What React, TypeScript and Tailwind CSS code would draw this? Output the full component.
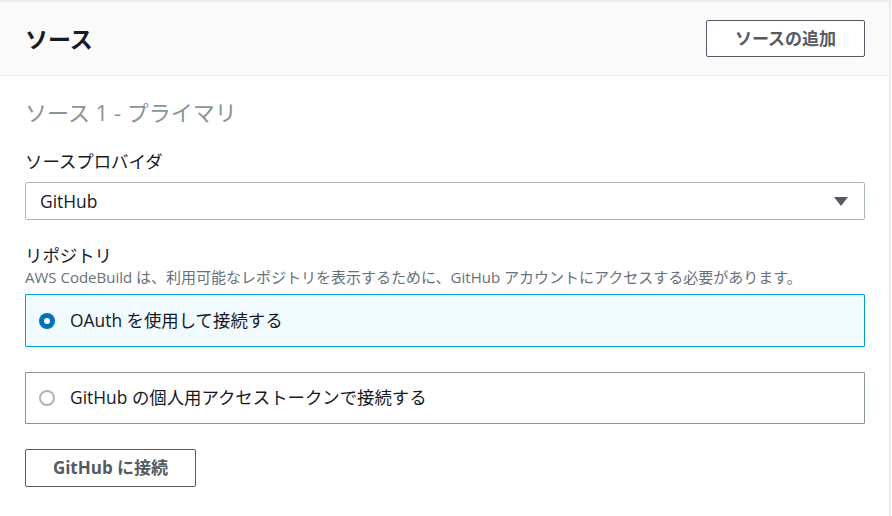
const font = {
  fontFamily: '"Open Sans", "Noto Sans CJK JP", sans-serif',
};

type RadioCardProps = {
  label: string;
  checked?: boolean;
};

const RadioCard = ({ label, checked }: RadioCardProps) => (
  <label
    className={
      checked
        ? "flex items-center h-[53px] border border-[#00a1c9] bg-[#f1faff] pl-[13px] rounded-[1px]"
        : "flex items-center h-[52px] border border-[#879596] bg-white pl-[13px] rounded-[1px]"
    }
  >
    {checked ? (
      <span className="w-4 h-4 rounded-full bg-[#0073bb] flex items-center justify-center">
        <span className="w-[6px] h-[6px] rounded-full bg-white" />
      </span>
    ) : (
      <span className="w-4 h-4 rounded-full border-2 border-[#aab7b8] bg-white" />
    )}
    <span className="ml-[15px] text-[17.4px] leading-6 text-[#16191f] -mt-[2px]">{label}</span>
  </label>
);

export default function App() {
  return (
    <div className="w-full h-[516px] overflow-hidden bg-white" style={font}>
      <div className="mr-px border-t-2 border-r-2 border-[#eaeded]">
        {/* Header */}
        <div className="flex items-center justify-between h-[74px] bg-[#fafafa] border-b border-[#eaeded] pl-[25px] pr-[24px]">
          <h2 className="text-[23px] leading-[30px] font-bold text-[#16191f]">ソース</h2>
          <button className="w-[159px] h-[37px] border border-[#545b64] rounded-[2px] bg-white text-[17px] font-bold text-[#545b64]">
            ソースの追加
          </button>
        </div>

        {/* Body */}
        <div className="pl-[25px] pr-[24px] pt-[21px]">
          <h3 className="text-[22px] leading-[30px] text-[#879596]">ソース 1 - プライマリ</h3>

          <div className="mt-[22px] text-[17.4px] leading-6 text-[#16191f]">ソースプロバイダ</div>
          <div className="mt-[9px] h-[38px] border border-[#aab7b8] rounded-[2px] flex items-center justify-between pl-[14px] pr-[16px]">
            <span className="text-[17.4px] text-[#16191f]">GitHub</span>
            <svg width="14" height="9" viewBox="0 0 14 9">
              <path d="M0 0 H14 L7 9 Z" fill="#545b64" />
            </svg>
          </div>

          <div className="mt-[23px] text-[17.4px] leading-6 text-[#16191f]">リポジトリ</div>
          <div className="text-[15px] leading-5 text-[#687078]">
            AWS CodeBuild は、利用可能なレポジトリを表示するために、GitHub アカウントにアクセスする必要があります。
          </div>

          <div className="mt-[7px] flex flex-col gap-[25px]">
            <RadioCard label="OAuth を使用して接続する" checked />
            <RadioCard label="GitHub の個人用アクセストークンで接続する" />
          </div>

          <button className="mt-[25px] w-[171px] h-[38px] border border-[#545b64] rounded-[2px] bg-white text-[17px] font-bold text-[#545b64]">
            GitHub に接続
          </button>

          <div className="mt-[28px] text-[17.4px] leading-6 text-[#16191f]">
            ソースバージョン - オプション
          </div>
        </div>
      </div>
    </div>
  );
}
